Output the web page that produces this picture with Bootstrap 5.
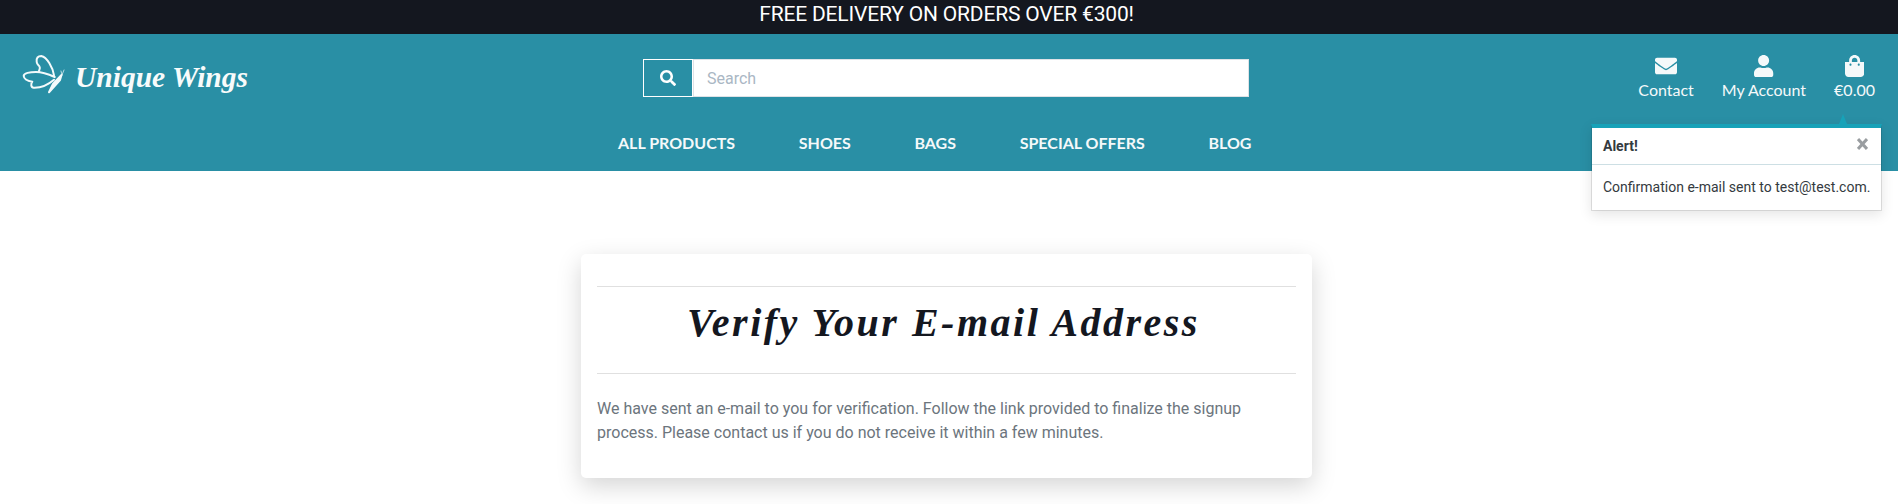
<!DOCTYPE html>
<html lang="en">
<head>
<meta charset="utf-8">
<title>Unique Wings</title>
<meta name="viewport" content="width=device-width, initial-scale=1">
<link href="https://cdn.jsdelivr.net/npm/bootstrap@5.3.0/dist/css/bootstrap.min.css" rel="stylesheet">
<style>
body { font-family: Roboto, sans-serif; height: 504px; overflow: hidden; }
.banner { background: #14171f; height: 34px; font-size: 21px; line-height: 28px; letter-spacing: -.18px; padding-right: 5px; }
.site-header { background: #298fa5; height: 137px; font-family: Lato, sans-serif; color: #f5f9fa; }
.header-top { height: 92px; }
.brand { font: italic 700 29.5px "Liberation Serif", serif; color: #f8fbfb; padding-left: 22px; padding-top: 21px; width: 643px; }
.brand-name { margin-left: 9px; line-height: 44px; white-space: nowrap; }
.search { width: 606px; height: 38px; margin-top: 25px; }
.search .btn { width: 50px; flex: none; border: 1px solid #fff; border-radius: 0; color: #fff; padding: 0; }
.search .form-control { border-radius: 0; border-color: #dee2e6; font-family: Roboto, sans-serif; padding: 7px 13px 5px; }
.search .form-control::placeholder { color: #aab7c4; opacity: 1; }
.tools { gap: 28px; margin-left: auto; padding: 21px 23px 0 0; line-height: 24px; }
.tools svg { height: 22px; display: block; margin: 0 auto 1px; }
.main-nav { gap: 63.7px; padding-left: 618px; font-weight: 700; line-height: 24px; padding-top: 5px; }
.verify { width: 731px; height: 224px; margin: 83px 0 0 581px; border-radius: 5px; box-shadow: 0 8px 24px rgba(0,0,0,.17); padding: 32px 16px; }
.verify hr { margin: 0; color: #000; opacity: .12; }
.verify h2 { font: italic 700 40px/72px "Liberation Serif", serif; letter-spacing: 2.5px; color: #14171f; margin: 0; height: 86px; white-space: nowrap; padding-right: 6px; }
.verify p { color: #6c757d; margin: 23px 0 0; line-height: 24px; }
.alert-box { position: absolute; left: 1591px; top: 124px; width: 291px; font-size: 14px; color: #343a40; white-space: nowrap; }
.alert-box .inner { background: #fff; border: 1px solid rgba(0,0,0,.1); border-top: 4px solid #17a2b8; box-shadow: 0 4px 12px rgba(0,0,0,.1); height: 87px; background-clip: padding-box; }
.alert-box .arrow { position: absolute; top: -10px; right: 35px; border: 4px solid transparent; border-top: 0; border-bottom: 10px solid #17a2b8; }
.alert-head { height: 37px; border-bottom: 1px solid #cddfe4; padding: 0 13px 0 11px; }
.alert-text { padding: 12px 11px; line-height: 21px; }
</style>
</head>
<body>
<div class="banner text-center text-white">FREE DELIVERY ON ORDERS OVER €300!</div>
<header class="site-header">
  <div class="header-top d-flex align-items-start">
    <div class="brand d-flex align-items-start">
      <svg width="44" height="40" viewBox="0 0 44 40" fill="none" stroke="#f3fafb" stroke-width="2" stroke-linecap="round" stroke-linejoin="round">
        <path d="M16.7 17C16.5 15 19 14 17.5 11.500C17 10 15 10 14.700 7C14 3 16 1 19.300 1C25 2 31 13 32 20.300"/>
        <path d="M32.700 22C26 19 20 17 14 17C8 17 1.500 18 1.700 21C2 24 6 26 10.300 26.700C8.500 29 9 32.700 11.700 32.700C20 33 27 29 32 24.700"/>
        <path d="M27 37.300L31 29L39.500 20L38 25Z" fill="#f3fafb"/>
        <path d="M40 20l2-5M40 20l-1-4" stroke-width=".7"/>
      </svg>
      <span class="brand-name">Unique Wings</span>
    </div>
    <div class="search d-flex">
      <button class="btn d-flex align-items-center justify-content-center" aria-label="Search"><svg width="16" height="16" viewBox="0 0 512 512" fill="currentColor"><path d="M505 442.7L405.3 343c-4.5-4.5-10.6-7-17-7H372c27.6-35.3 44-79.7 44-128C416 93.1 322.9 0 208 0S0 93.1 0 208s93.1 208 208 208c48.3 0 92.7-16.4 128-44v16.3c0 6.4 2.5 12.5 7 17l99.7 99.7c9.4 9.4 24.6 9.4 33.9 0l28.3-28.3c9.4-9.4 9.4-24.6.1-34zM208 336c-70.7 0-128-57.2-128-128 0-70.7 57.2-128 128-128 70.7 0 128 57.2 128 128 0 70.7-57.2 128-128 128z"/></svg></button>
      <input class="form-control" type="text" placeholder="Search">
    </div>
    <div class="tools d-flex text-center">
      <div><svg viewBox="0 0 512 512" fill="currentColor"><path d="M502.3 190.8c3.9-3.1 9.7-.2 9.7 4.7V400c0 26.5-21.5 48-48 48H48c-26.5 0-48-21.5-48-48V195.6c0-5 5.7-7.8 9.7-4.7 22.4 17.4 52.1 39.5 154.1 113.6 21.1 15.4 56.7 47.8 92.2 47.6 35.7.3 72-32.8 92.3-47.6 102-74.1 131.6-96.3 154-113.7zM256 320c23.2.4 56.6-29.2 73.4-41.4 132.7-96.3 142.8-104.7 173.4-128.7 5.8-4.5 9.2-11.5 9.2-18.9v-19c0-26.5-21.5-48-48-48H48c-26.5 0-48 21.5-48 48v19c0 7.4 3.4 14.3 9.2 18.9 30.6 23.9 40.7 32.4 173.4 128.7 16.8 12.2 50.2 41.8 73.4 41.4z"/></svg>Contact</div>
      <div><svg viewBox="0 0 448 512" fill="currentColor"><path d="M224 256c70.7 0 128-57.3 128-128S294.7 0 224 0 96 57.3 96 128s57.3 128 128 128zm89.6 32h-16.7c-22.2 10.2-46.9 16-72.9 16s-50.6-5.8-72.9-16h-16.7C60.2 288 0 348.2 0 422.4V464c0 26.5 21.5 48 48 48h352c26.5 0 48-21.5 48-48v-41.6c0-74.2-60.2-134.4-134.4-134.4z"/></svg>My Account</div>
      <div><svg viewBox="0 0 448 512" fill="currentColor"><path d="M352 160v-32C352 57.42 294.579 0 224 0 153.42 0 96 57.42 96 128v32H0v272c0 44.183 35.817 80 80 80h288c44.183 0 80-35.817 80-80V160h-96zm-192-32c0-35.29 28.71-64 64-64s64 28.71 64 64v32H160v-32zm160 120c-13.255 0-24-10.745-24-24s10.745-24 24-24 24 10.745 24 24-10.745 24-24 24zm-192 0c-13.255 0-24-10.745-24-24s10.745-24 24-24 24 10.745 24 24-10.745 24-24 24z"/></svg>€0.00</div>
    </div>
  </div>
  <nav class="main-nav d-flex"><span>ALL PRODUCTS</span><span>SHOES</span><span>BAGS</span><span>SPECIAL OFFERS</span><span>BLOG</span></nav>
</header>
<main class="verify bg-white">
  <hr>
  <h2 class="text-center">Verify Your E-mail Address</h2>
  <hr>
  <p>We have sent an e-mail to you for verification. Follow the link provided to finalize the signup process. Please contact us if you do not receive it within a few minutes.</p>
</main>
<div class="alert-box">
  <div class="arrow"></div>
  <div class="inner">
    <div class="alert-head d-flex justify-content-between align-items-center"><strong class="fw-bold">Alert!</strong>
      <svg class="mb-1" width="11" height="12" viewBox="0 0 11 12" stroke="#999da0" stroke-width="3" fill="none"><path d="M1 1l9 10M10 1L1 11"/></svg></div>
    <div class="alert-text">Confirmation e-mail sent to test@test.com.</div>
  </div>
</div>
<script src="https://cdn.jsdelivr.net/npm/bootstrap@5.3.0/dist/js/bootstrap.bundle.min.js"></script>
</body>
</html>
